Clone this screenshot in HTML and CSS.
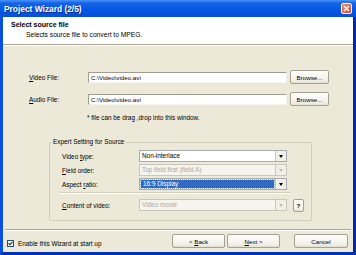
FILE: index.html
```html
<!DOCTYPE html>
<html lang="en">
<head>
    <meta charset="UTF-8">
    <title>Project Wizard (2/5)</title>
    <link rel="stylesheet" href="styles.css">
</head>
<body>

<div class="window">
    <div class="titlebar">
        <span class="title">Project Wizard (2/5)</span>
        <span class="close">
            <svg width="7" height="7" viewBox="0 0 7 7"><path d="M1 1L6 6M6 1L1 6" stroke="#fff" stroke-width="1.4"/></svg>
        </span>
    </div>

    <div class="frame">
        <div class="header">
            <div class="header-title">Select source file</div>
            <div class="header-sub">Selects source file to convert to MPEG.</div>
        </div>

        <div class="content">
            <div class="file-row">
                <label><u>V</u>ideo File:</label>
                <div class="textbox">C:\Video\video.avi</div>
                <button class="btn">Browse...</button>
            </div>
            <div class="file-row">
                <label><u>A</u>udio File:</label>
                <div class="textbox">C:\Video\video.avi</div>
                <button class="btn">Browse...</button>
            </div>
            <div class="note">* file can be drag ,drop into this window.</div>

            <fieldset class="group">
                <legend>Expert Setting for Source</legend>
                <div class="opt-row">
                    <label>Video <u>t</u>ype:</label>
                    <div class="select"><span class="value">Non-interlace</span><span class="arrow"></span></div>
                </div>
                <div class="opt-row">
                    <label><u>F</u>ield order:</label>
                    <div class="select disabled"><span class="value">Top field first (field A)</span><span class="arrow"></span></div>
                </div>
                <div class="opt-row">
                    <label>Aspect <u>r</u>atio:</label>
                    <div class="select"><span class="value selected">16:9 Display</span><span class="arrow"></span></div>
                </div>
                <div class="group-sep"></div>
                <div class="opt-row">
                    <label><u>C</u>ontent of video:</label>
                    <div class="select disabled"><span class="value">Video movie</span><span class="arrow"></span></div>
                    <button class="btn help">?</button>
                </div>
            </fieldset>
        </div>

        <div class="sep"></div>

        <div class="footer">
            <label class="check">
                <span class="box">
                    <svg width="5" height="5" viewBox="0 0 5 5"><path d="M0.5 2.2L2 3.7L4.5 0.8" fill="none" stroke="#1f3d1f" stroke-width="1.2"/></svg>
                </span>
                Enable this Wizard at start up
            </label>
            <div class="nav">
                <button class="btn nav-btn">&lt; <u>B</u>ack</button>
                <button class="btn nav-btn"><u>N</u>ext &gt;</button>
                <button class="btn nav-btn cancel">Cancel</button>
            </div>
        </div>
    </div>
</div>

</body>
</html>
```

FILE: styles.css
```css
body {
    margin: 0;
    font-family: "Liberation Sans", Arial, sans-serif;
    font-size: 6.4px;
    color: #000;
    background: #ece9d8;
}
.window {
    width: 356px;
    height: 255px;
    display: flex;
    flex-direction: column;
}
.titlebar {
    height: 17px;
    display: flex;
    align-items: center;
    justify-content: space-between;
    padding: 0 4px 0 4px;
    box-sizing: border-box;
    background: linear-gradient(#4a94f6 0, #1464ea 18%, #0558e4 55%, #0450d8 100%);
}
.title {
    color: #fff;
    font-weight: bold;
    font-size: 8.4px;
    text-shadow: 1px 1px 0 #0a2a8a;
}
.close {
    width: 11px;
    height: 11px;
    box-sizing: border-box;
    border: 1px solid #fff;
    border-radius: 2px;
    background: linear-gradient(135deg, #f08a6a, #d8482a);
    display: flex;
    align-items: center;
    justify-content: center;
}
.frame {
    flex: 1;
    display: flex;
    flex-direction: column;
    border-left: 3px solid #0b4fe0;
    border-right: 3px solid #0028a8;
    border-bottom: 3px solid #0030b8;
    background: #ece9d8;
}
.header {
    height: 27px;
    background: #fff;
    border-bottom: 1px solid #aca899;
    box-shadow: 0 1px 0 #fff;
    padding-left: 8px;
}
.header-title {
    font-weight: bold;
    font-size: 7px;
    margin-top: 4px;
}
.header-sub {
    margin: 3px 0 0 15px;
    font-size: 6.7px;
}
.content {
    flex: 1;
    padding: 25px 0 0 26px;
}
.file-row {
    display: grid;
    grid-template-columns: 56px 199px 39px;
    column-gap: 3px;
    align-items: center;
    height: 14px;
    margin-bottom: 8px;
}
.textbox {
    height: 11px;
    box-sizing: border-box;
    background: #fff;
    border: 1px solid;
    border-color: #a09d8e #f4f3ec #f4f3ec #a09d8e;
    padding-left: 2px;
    line-height: 9px;
    font-size: 6.2px;
}
.btn {
    font-family: inherit;
    font-size: 6.2px;
    color: #000;
    height: 14px;
    padding: 0;
    box-sizing: border-box;
    border: 1px solid #a5a294;
    border-radius: 2px;
    background: linear-gradient(#fefefd, #f1efe6 80%, #e2dfd2);
}
.note {
    margin: 0 0 0 58px;
    line-height: 8px;
}
.group {
    margin: 16px 0 0 20px;
    padding: 4px 0 7px 12px;
    width: 263px;
    box-sizing: border-box;
    border: 1px solid #d0cebf;
    border-radius: 2px;
}
.group legend {
    padding: 0 1px;
    margin-left: -10px;
    line-height: 8px;
}
.opt-row {
    display: flex;
    align-items: center;
    height: 12px;
    margin-bottom: 2px;
}
.opt-row label {
    width: 77px;
}
.select {
    width: 148px;
    height: 12px;
    box-sizing: border-box;
    display: flex;
    background: #fff;
    border: 1px solid #a5acb2;
}
.select .value {
    flex: 1;
    padding-left: 2px;
    line-height: 10px;
}
.select .value.selected {
    background: #316ac5;
    color: #fff;
    margin: 1px;
    line-height: 8px;
    outline: 1px dotted #9ab;
}
.select .arrow {
    width: 10px;
    background: #f1f0e8;
    border-left: 1px solid #c9c7ba;
    display: flex;
    align-items: center;
    justify-content: center;
}
.select .arrow::after {
    content: "";
    border-top: 3px solid #000;
    border-left: 2.5px solid transparent;
    border-right: 2.5px solid transparent;
}
.select.disabled {
    background: #f5f4ee;
    border-color: #c9c7ba;
    color: #aca899;
}
.select.disabled .arrow::after {
    border-top-color: #c0bdb0;
}
.group-sep {
    width: 231px;
    margin: 2px 0 5px -2px;
    border-top: 1px solid #d0cebf;
    border-bottom: 1px solid #fff;
}
.help {
    width: 11px;
    height: 13px;
    margin-left: 6px;
    font-weight: bold;
}
.sep {
    margin: 0 2px;
    border-top: 1px solid #aca899;
    border-bottom: 1px solid #fff;
}
.footer {
    height: 21px;
    display: flex;
    align-items: center;
    justify-content: space-between;
    padding: 0 5px 0 4px;
}
.check {
    display: flex;
    align-items: center;
    gap: 4px;
    margin-top: 3px;
}
.box {
    width: 7px;
    height: 7px;
    box-sizing: border-box;
    border: 1px solid #1c5180;
    background: #fff;
    display: flex;
    align-items: center;
    justify-content: center;
}
.nav {
    display: flex;
    gap: 2px;
    margin-top: -1px;
}
.nav-btn {
    width: 53px;
}
.cancel {
    width: 54px;
    margin-left: 12px;
}
```
